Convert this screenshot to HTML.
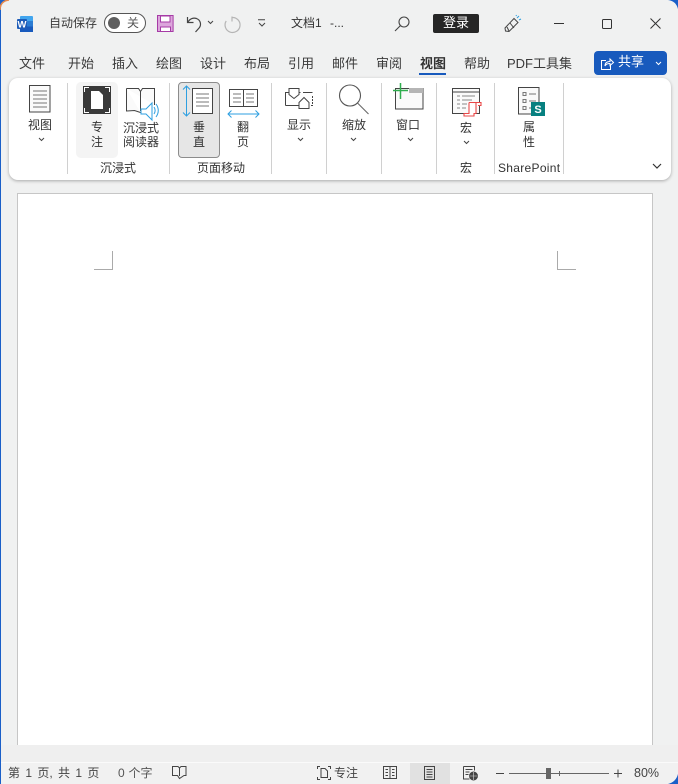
<!DOCTYPE html>
<html lang="zh-CN"><head><meta charset="utf-8"><title>文档1</title>
<style>
html,body{margin:0;padding:0;width:678px;height:784px;overflow:hidden;background:#1a5fc8}
#w{position:absolute;left:1px;top:0;width:677px;height:784px;background:#f0f1f1;border-radius:8px;overflow:hidden}
#root{position:absolute;left:0;top:0;width:678px;height:784px;font-family:"Liberation Sans","Noto Sans CJK SC",sans-serif;color:#333}
.t{position:absolute;white-space:nowrap;font-size:12px;line-height:16px;color:#333;text-align:center}
.tab{font-size:13px;line-height:18px;top:55px;color:#3a3a3a}
.sep{position:absolute;top:83px;height:91px;width:1px;background:#d0d0d0}
svg{position:absolute;overflow:visible}
</style></head><body>
<div id="w"></div>
<div id="root">
<svg style="left:0;top:0" width="20" height="20"><path d="M0 10 Q0 1 9 0" fill="none" stroke="#e8894a" stroke-width="1.5"/></svg>

<!-- word icon -->
<svg style="left:17px;top:16px" width="17" height="16" viewBox="0 0 17 16"><rect x="3" y="0" width="13" height="16" rx="1" fill="#41a5ee"/><rect x="3" y="5" width="13" height="5.500" fill="#2b7cd3"/><rect x="3" y="10.500" width="13" height="5.500" fill="#185abd"/><rect x="0" y="3" width="10" height="10" rx="1" fill="#1d5cb8"/><text x="5" y="11.500" text-anchor="middle" font-family="Liberation Sans" font-weight="700" font-size="9.500" fill="#fff">W</text></svg>
<div class="t" style="left:49px;top:15px;color:#3a3a3a">自动保存</div>
<div style="position:absolute;left:104px;top:13px;width:40px;height:18px;border:1px solid #555;border-radius:10px;background:#fff"></div>
<div style="position:absolute;left:108px;top:17px;width:12px;height:12px;border-radius:50%;background:#5e5e5e"></div>
<div class="t" style="left:127px;top:15px;color:#555">关</div>
<!-- save -->
<svg style="left:157px;top:15px" width="17" height="17" viewBox="0 0 17 17"><path d="M.5.500h15.600v16H.5z" fill="#dca6dc" stroke="#a63ba6"/><path d="M3.500 1h9.500v6H3.500z" fill="#fff" stroke="#a63ba6"/><path d="M3.500 12h10v4.500h-10z" fill="#fff" stroke="#a63ba6"/></svg>
<!-- undo -->
<svg style="left:186px;top:15px" width="17" height="18" viewBox="0 0 17 18" fill="none" stroke="#444" stroke-width="1.200"><path d="M1.500 2v5.500h6"/><path d="M2 7C4 3.500 7.500 2.500 10.500 3.500c4 1.500 5 6 3 9l-4 4.500"/></svg>
<svg style="left:207px;top:20px" width="8" height="5" fill="none" stroke="#444"><path d="M1 1l2.500 2.500L6 1"/></svg>
<!-- redo -->
<svg style="left:224px;top:15px" width="18" height="18" viewBox="0 0 18 18" fill="none" stroke="#b5b5b5" stroke-width="1.200"><path d="M8 1.500v5"/><path d="M8 2.500A7.500 7.500 0 1 1 2.200 6"/></svg>
<svg style="left:257px;top:19px" width="10" height="9" fill="none" stroke="#444"><path d="M1 .8h7M2 4l3 3 3-3"/></svg>
<div class="t" style="left:291px;top:15px;color:#333">文档1</div>
<div class="t" style="left:330px;top:15px;color:#333">-...</div>
<!-- search -->
<svg style="left:394px;top:16px" width="16" height="16" viewBox="0 0 16 16" fill="none" stroke="#444" stroke-width="1.100"><circle cx="10" cy="6" r="5"/><path d="M6.500 9.500L1 15"/></svg>
<div style="position:absolute;left:433px;top:14px;width:46px;height:19px;background:#262626;border-radius:2px"></div>
<div class="t" style="left:433px;top:15px;width:46px;color:#fff;font-size:13px">登录</div>
<!-- pen/coauthor -->
<svg style="left:504px;top:15px" width="18" height="18" viewBox="0 0 18 18" fill="none" stroke="#444" stroke-width="1"><path d="M1 13L10 3.500l4 4L5 16.500 1.500 16z"/><path d="M6 8l4 5M3 12l2 4"/><path d="M13 3l2-2M15 5l2-1M12 1l.5-1" stroke="#2e9fe0"/></svg>
<!-- window controls -->
<div style="position:absolute;left:554px;top:23px;width:10px;height:1px;background:#333"></div>
<div style="position:absolute;left:602px;top:19px;width:8px;height:8px;border:1px solid #333;border-radius:1.500px"></div>
<svg style="left:650px;top:18px" width="11" height="11" fill="none" stroke="#333"><path d="M.5.500l10 10M10.500.500l-10 10"/></svg>

<!-- tabs -->
<div class="t tab" style="left:19px">文件</div>
<div class="t tab" style="left:68px">开始</div>
<div class="t tab" style="left:112px">插入</div>
<div class="t tab" style="left:156px">绘图</div>
<div class="t tab" style="left:200px">设计</div>
<div class="t tab" style="left:244px">布局</div>
<div class="t tab" style="left:288px">引用</div>
<div class="t tab" style="left:332px">邮件</div>
<div class="t tab" style="left:376px">审阅</div>
<div class="t tab" style="left:420px;font-weight:700;color:#333">视图</div>
<div style="position:absolute;left:419px;top:73px;width:27px;height:2px;background:#185abd"></div>
<div class="t tab" style="left:464px">帮助</div>
<div class="t tab" style="left:507px">PDF工具集</div>
<div style="position:absolute;left:594px;top:51px;width:73px;height:24px;background:#185abd;border-radius:4px"></div>
<svg style="left:601px;top:57px" width="13" height="13" viewBox="0 0 13 13" fill="none" stroke="#fff"><path d="M5 3.500H.5v9h9V8"/><path d="M4 9c0-3 2-4.500 5-4.500V2l3.500 3.500L9 8.500V6.500C7 6.500 5 7 4 9z"/></svg>
<div class="t" style="left:618px;top:53px;color:#fff;font-size:13px;line-height:18px">共享</div>
<svg style="left:655px;top:61px" width="8" height="5" fill="none" stroke="#fff"><path d="M1 1l2.500 2.500L6 1"/></svg>

<!-- ribbon -->
<div style="position:absolute;left:9px;top:78px;width:662px;height:102px;background:#fff;border-radius:9px;box-shadow:0 1px 3px rgba(0,0,0,.3)"></div>
<div class="sep" style="left:67px"></div><div class="sep" style="left:169px"></div><div class="sep" style="left:271px"></div><div class="sep" style="left:326px"></div><div class="sep" style="left:381px"></div><div class="sep" style="left:436px"></div><div class="sep" style="left:494px"></div><div class="sep" style="left:563px"></div>

<!-- view -->
<svg style="left:29px;top:85px" width="22" height="28" viewBox="0 0 22 28" fill="#fafafa" stroke="#444"><path d="M.5.500h20.500v26.500H.5z"/><path d="M4 6h14M4 10h14M4 14h14M4 18h14M4 22h14" stroke="#777"/></svg>
<div class="t" style="left:28px;top:117px">视图</div>
<svg style="left:38px;top:137px" width="8" height="5" fill="none" stroke="#444"><path d="M1 1l2.500 2.500L6 1"/></svg>

<!-- focus -->
<div style="position:absolute;left:76px;top:82px;width:42px;height:76px;background:#f4f4f4;border-radius:5px"></div>
<svg style="left:83px;top:86px" width="28" height="28" viewBox="0 0 28 28"><rect width="28" height="28" fill="#3a3a3a"/><path d="M1.500 6V1.500H6M22 1.500h4.500V6M26.500 22v4.500H22M6 26.500H1.500V22" fill="none" stroke="#fff"/><path d="M8 5h8l4 4v14H8z" fill="#fff"/></svg>
<div class="t" style="left:91px;top:119px">专</div><div class="t" style="left:91px;top:134px">注</div>
<!-- reader -->
<svg style="left:126px;top:87px" width="32" height="36" viewBox="0 0 32 36" fill="none"><path d="M.5 1.500h12l2 3 2-3h12V18M14.500 4.500V24M.5 1.500V24l8-.5 6 2" stroke="#444" fill="#fafafa"/><path d="M15 22h5l6-6v17l-6-6h-5z" fill="#fff" stroke="#2e9fe0"/><path d="M28 20c1.500 2 1.500 5 0 7M30 17c3 4 3 9 0 13" stroke="#2e9fe0"/></svg>
<div class="t" style="left:123px;top:120px">沉浸式</div>
<div class="t" style="left:123px;top:134px">阅读器</div>
<div class="t" style="left:100px;top:160px">沉浸式</div>

<!-- vertical -->
<div style="position:absolute;left:178px;top:82px;width:40px;height:74px;background:#e6e6e6;border:1px solid #8c8c8c;border-radius:4px"></div>
<svg style="left:182px;top:85px" width="32" height="32" viewBox="0 0 32 32" fill="none"><path d="M4.500 1v30M1 4.500L4.500 1 8 4.500M1 27.500L4.500 31 8 27.500" stroke="#2e9fe0"/><path d="M10.500 3.500h20v25h-20z" fill="#fff" stroke="#444"/><path d="M14 9h13M14 13h13M14 17h13M14 21h13" stroke="#777"/></svg>
<div class="t" style="left:193px;top:119px">垂</div><div class="t" style="left:193px;top:134px">直</div>
<!-- page flip -->
<svg style="left:227px;top:89px" width="33" height="30" viewBox="0 0 33 30" fill="none"><path d="M2.500.500h28v17h-28z" fill="#fff" stroke="#444"/><path d="M16.500.500v17" stroke="#444"/><path d="M6 5h8M6 9h8M6 13h8M19 5h8M19 9h8M19 13h8" stroke="#777"/><path d="M1 25h31M4.500 21.500L1 25l3.500 3.500M28.500 21.500L32 25l-3.500 3.500" stroke="#2e9fe0"/></svg>
<div class="t" style="left:237px;top:119px">翻</div><div class="t" style="left:237px;top:134px">页</div>
<div class="t" style="left:197px;top:160px">页面移动</div>

<!-- show -->
<svg style="left:285px;top:88px" width="28" height="21" viewBox="0 0 28 21" fill="none" stroke="#444"><path d="M.5 17.500V4.500h3.500M.5 17.500h13"/><path d="M4 .5h10v6l-5 4-5-4z"/><path d="M14 4.500h1.500M18 4.500h9.500"/><path d="M14 20.500v-6l5-5 5 5v6z"/><path d="M27.500 8v9.500H25" stroke-dasharray="2 1"/></svg>
<div class="t" style="left:287px;top:117px">显示</div>
<svg style="left:297px;top:137px" width="8" height="5" fill="none" stroke="#444"><path d="M1 1l2.500 2.500L6 1"/></svg>

<!-- zoom -->
<svg style="left:339px;top:84px" width="31" height="31" viewBox="0 0 31 31" fill="none" stroke="#555" stroke-width="1.100"><circle cx="11" cy="11.500" r="10.500" fill="#fff"/><path d="M18.500 19l11 11" stroke="#666"/></svg>
<div class="t" style="left:342px;top:117px">缩放</div>
<svg style="left:350px;top:137px" width="8" height="5" fill="none" stroke="#444"><path d="M1 1l2.500 2.500L6 1"/></svg>

<!-- window -->
<svg style="left:393px;top:83px" width="31" height="27" viewBox="0 0 31 27" fill="none"><path d="M2.500 5.500h27.500v20.500H2.500z" fill="#fafafa" stroke="#444"/><rect x="16" y="5" width="14" height="5" fill="#b5b5b5"/><path d="M7.500 0v16M0 7.500h15" stroke="#2fae4e" stroke-width="1.500"/></svg>
<div class="t" style="left:396px;top:117px">窗口</div>
<svg style="left:407px;top:137px" width="8" height="5" fill="none" stroke="#444"><path d="M1 1l2.500 2.500L6 1"/></svg>

<!-- macro -->
<svg style="left:452px;top:88px" width="30" height="29" viewBox="0 0 30 29" fill="none"><path d="M.5.500h27v25H.5z" fill="#fafafa" stroke="#444"/><path d="M.5 4h27" stroke="#444"/><path d="M5 8h3M10 8h13M5 12h3M10 12h10M5 16h3M10 16h5M5 20h3M10 20h4" stroke="#888"/><path d="M17 14.500h12v3h-3M17 14.500v11h-5v2.500h10v-2.500h2v-11" fill="#fff" stroke="#e94848" stroke-width="1.100"/></svg>
<div class="t" style="left:460px;top:120px">宏</div>
<svg style="left:463px;top:140px" width="8" height="5" fill="none" stroke="#444"><path d="M1 1l2.500 2.500L6 1"/></svg>
<div class="t" style="left:460px;top:160px">宏</div>

<!-- properties -->
<svg style="left:518px;top:87px" width="28" height="30" viewBox="0 0 28 30" fill="none"><path d="M.5.500h20.500V27H.5z" fill="#fafafa" stroke="#444"/><path d="M5 5.500h3v3H5zM5 12.500h3v3H5zM5 19.500h3v3H5z" stroke="#777"/><path d="M11 7h7M11 14h7M11 21h5" stroke="#777"/><rect x="13" y="15" width="14" height="14" fill="#078080"/><text x="20" y="26" text-anchor="middle" font-family="Liberation Sans" font-weight="700" font-size="11" fill="#fff" stroke="none">S</text></svg>
<div class="t" style="left:523px;top:119px">属</div><div class="t" style="left:523px;top:134px">性</div>
<div class="t" style="left:498px;top:160px;letter-spacing:.3px">SharePoint</div>
<svg style="left:652px;top:163px" width="11" height="7" fill="none" stroke="#333" stroke-width="1.200"><path d="M1 1l4 4 4-4"/></svg>

<!-- page -->
<div style="position:absolute;left:17px;top:193px;width:634px;height:552px;background:#fff;border:1px solid #c6c6c6;border-bottom:none"></div>
<div style="position:absolute;left:1px;top:745px;width:677px;height:17px;background:#efefef"></div>
<svg style="left:94px;top:251px" width="20" height="20" fill="none" stroke="#aaa"><path d="M18.500 0v18.500H0"/></svg>
<svg style="left:557px;top:251px" width="20" height="20" fill="none" stroke="#aaa"><path d="M.5 0v18.500H19"/></svg>

<!-- status bar -->
<div style="position:absolute;left:1px;top:762px;width:677px;height:22px;background:#f1f1f1;border-top:1px solid #fafafa;box-sizing:border-box"></div>
<div class="t" style="left:8px;top:765px;color:#444;word-spacing:2px">第 1 页, 共 1 页</div>
<div class="t" style="left:118px;top:765px;color:#555;word-spacing:.5px">0 个字</div>
<svg style="left:172px;top:766px" width="15" height="14" fill="none" stroke="#444"><path d="M.5.500h5.500l1.500 1.500L9 .5h5v9h-2l-4.500 3-2-3H.5zM7.500 2v8"/></svg>
<svg style="left:317px;top:766px" width="14" height="14" fill="none" stroke="#444"><path d="M.5 3V.5H3M11 .5h2.500V3M13.500 11v2.500H11M3 13.500H.5V11"/><path d="M4 2.500h4l2.500 2.500v6.500H4z"/></svg>
<div class="t" style="left:334px;top:765px;color:#444">专注</div>
<svg style="left:383px;top:766px" width="14" height="13" fill="none" stroke="#444"><path d="M.5.500h13v12H.5zM7 .5v12M2.500 3.500h2.500M2.500 6.500h2.500M2.500 9.500h2.500M9 3.500h2.500M9 6.500h2.500M9 9.500h2.500"/></svg>
<div style="position:absolute;left:410px;top:763px;width:40px;height:21px;background:#e1e1e1"></div>
<svg style="left:424px;top:766px" width="12" height="14" fill="none" stroke="#444"><path d="M.5.500h10v13H.5zM2.500 3.500h6M2.500 6h6M2.500 8.500h6M2.500 11h6"/></svg>
<svg style="left:463px;top:766px" width="15" height="15" fill="none" stroke="#444"><path d="M.5.500h11v4M.5.500v12.500h6M2.500 3.500h7M2.500 6h4M2.500 8.500h3"/><circle cx="10.500" cy="10" r="4" fill="#444"/><path d="M6.500 10h8M10.500 6v8" stroke="#ddd" stroke-width=".6"/></svg>
<div style="position:absolute;left:496px;top:773px;width:8px;height:1px;background:#444"></div>
<div style="position:absolute;left:509px;top:773px;width:100px;height:1px;background:#666"></div>
<div style="position:absolute;left:546px;top:768px;width:5px;height:11px;background:#666"></div>
<div style="position:absolute;left:559px;top:771px;width:1px;height:5px;background:#666"></div>
<svg style="left:614px;top:769px" width="8" height="9" stroke="#444" fill="none"><path d="M0 4.500h8M4 .5v8"/></svg>
<div class="t" style="left:634px;top:765px;color:#444;font-size:12.500px">80%</div>
<svg style="left:668px;top:774px" width="10" height="10"><path d="M10 0v10H0Q8 8 10 0z" fill="#1a5fc8"/></svg>
<svg style="left:668px;top:0" width="10" height="10"><path d="M0 0Q8 1 10 9V0z" fill="#1a5fc8"/></svg>
</div>
</body></html>
